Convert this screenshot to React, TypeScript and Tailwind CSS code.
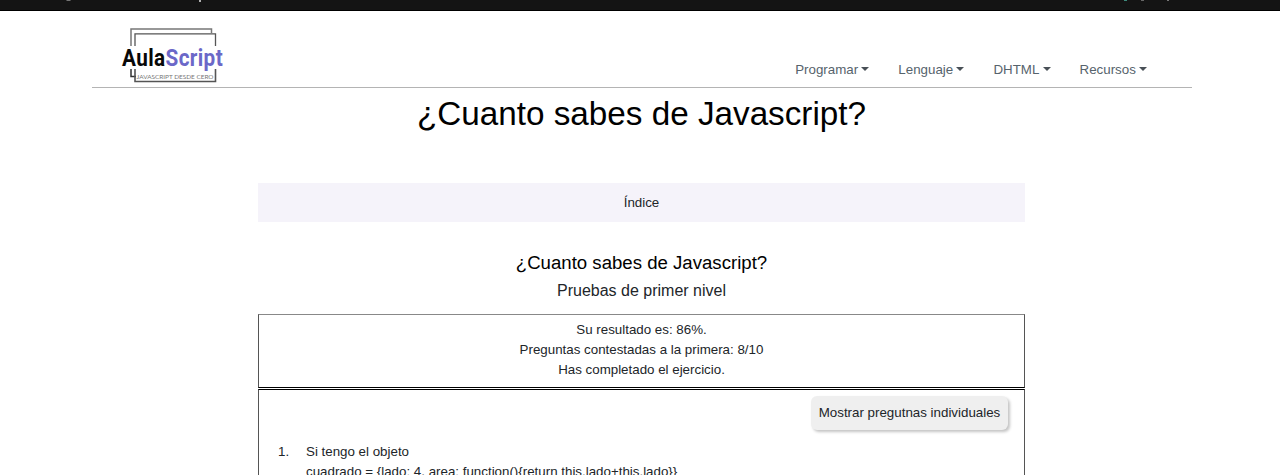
const menu = ['Programar', 'Lenguaje', 'DHTML', 'Recursos'];

function BrowserBar() {
  return (
    <div className="h-[11px] border-b border-black bg-[#141414]">
      <svg className="block" width="1280" height="10" viewBox="0 0 1280 10">
        <rect x="66.500" y="0" width="4" height="1" fill="#747474" />
        <rect x="199" y="0" width="2" height="2" fill="#b0b0b0" />
        <rect x="1124" y="0" width="3" height="1" fill="#3d8a7c" />
        <rect x="1141" y="0" width="3" height="1" fill="#666" />
        <rect x="1167" y="0" width="2" height="1" fill="#777" />
      </svg>
    </div>
  );
}

function Logo() {
  return (
    <svg width="104" height="58" viewBox="0 0 104 58" className="block overflow-visible">
      <g fill="none">
        <path d="M10 20V3H90.500V7" stroke="#777" strokeWidth="1.5" />
        <path d="M10 43V50.500H15" stroke="#333" strokeWidth="1.5" />
        <path d="M14 20V7.800H94.500V20" stroke="#555" strokeWidth="1.3" />
        <path d="M14 43V55.500H94.500V43" stroke="#555" strokeWidth="1.6" />
      </g>
      <g fontFamily="Roboto, sans-serif" fontWeight="700" fontSize="23">
        <text transform="translate(1 39.500) scale(0.9 1)" fill="#080808" textLength="48" lengthAdjust="spacing">Aula</text>
        <text transform="translate(44.500 39.500) scale(0.9 1)" fill="#6b68c8" textLength="63.500" lengthAdjust="spacing">Script</text>
      </g>
      <text x="15.500" y="52.500" fontFamily="Lato, sans-serif" fontSize="6.500" fill="#777" textLength="77" lengthAdjust="spacingAndGlyphs">
        JAVASCRIPT DESDE CERO
      </text>
    </svg>
  );
}

export default function App() {
  return (
    <div className="h-[475px] w-[1280px] overflow-hidden bg-white font-['Liberation_Sans',Arial,sans-serif] text-[13.33px] leading-5 text-[#212529]">
      <BrowserBar />
      <header className="ml-[92px] flex h-[77px] w-[1100px] items-start justify-between border-b border-[#b4b4b4] pr-[45px] pl-[29px]">
        <div className="pt-[15px]">
          <Logo />
        </div>
        <nav className="flex gap-[29px] pt-[49px] text-[#56636c]">
          {menu.map((label) => (
            <a key={label} className="flex items-center">
              {label}
              <span className="mt-[-2px] ml-[3.2px] border-x-4 border-t-4 border-x-transparent border-t-[#495057]" />
            </a>
          ))}
        </nav>
      </header>
      <main className="ml-[258px] w-[767px] text-center">
        <h1 className="h-[95px] pt-[6px] text-[33.25px] leading-10 text-black">¿Cuanto sabes de Javascript?</h1>
        <div className="h-[39px] bg-[#f5f3fa] leading-[39px]">Índice</div>
        <h2 className="mt-[29px] text-[18.62px] leading-6 text-black">¿Cuanto sabes de Javascript?</h2>
        <h3 className="mt-[4px] text-[16px] leading-6">Pruebas de primer nivel</h3>
        <section className="mt-[11px] h-[74px] border border-[#555] border-t-[#888] border-b-black pt-[5px]">
          <p>Su resultado es: 86%.</p>
          <p>Preguntas contestadas a la primera: 8/10</p>
          <p>Has completado el ejercicio.</p>
        </section>
        <section className="mt-px h-[120px] border border-[#555] border-t-black pt-1.5 text-left">
          <div className="flex justify-end pr-4">
            <button className="h-[34px] w-[197px] rounded-md bg-[#efefef] text-center shadow-[2px_2px_3px_#c4c4c4]">
              Mostrar pregutnas individuales
            </button>
          </div>
          <div className="mt-3 flex pl-[19px]">
            <span className="w-7">1.</span>
            <div>
              <p>Si tengo el objeto</p>
              <p>cuadrado = {'{lado: 4, area: function(){return this.lado+this.lado}}'}</p>
            </div>
          </div>
        </section>
      </main>
    </div>
  );
}
